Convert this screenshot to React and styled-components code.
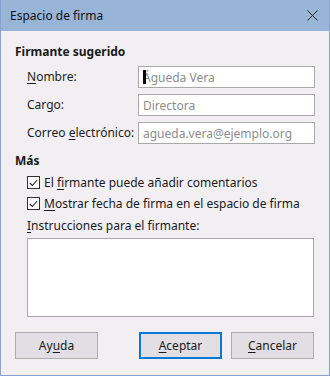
import React from 'react'
import styled, { createGlobalStyle } from 'styled-components'

const Global = createGlobalStyle`
  html, body { margin: 0; padding: 0; background: #f2eff3; }
  body { font-family: "Noto Sans", "Open Sans", sans-serif; font-size: 12px; color: #1a1a1a; }
`

const Window = styled.div`
  width: 330px;
  height: 376px;
  box-sizing: border-box;
  border: 1px solid #86a4cc;
  border-top: none;
  background: #f2eff3;
  display: flex;
  flex-direction: column;
`

const TitleBar = styled.div`
  height: 31px;
  flex: none;
  background: #98b4d7;
  display: flex;
  align-items: center;
  justify-content: space-between;
  padding: 0 11px 0 9px;
  font-size: 12px;
  color: #111;
`

const CloseBtn = styled.svg`
  width: 11px;
  height: 11px;
`

const Body = styled.div`
  flex: 1;
  display: flex;
  flex-direction: column;
  padding: 13px 14px 0 14px;
`

const Heading = styled.div`
  font-weight: bold;
  line-height: 16px;
  height: 16px;
  margin-top: ${p => p.$top || 0}px;
`

const FormGrid = styled.div`
  display: grid;
  grid-template-columns: 111px 1fr;
  row-gap: 6px;
  margin: 6px 0 0 12px;
  align-items: center;
`

const Label = styled.div`
  line-height: 22px;
`

const Field = styled.div`
  position: relative;
  height: 22px;
  box-sizing: border-box;
  border: 1px solid #a9a9a9;
  background: #fff;
  color: #8c8c8c;
  padding: 0 4px;
  display: flex;
  align-items: center;
  white-space: nowrap;
  overflow: hidden;
`

const Caret = styled.span`
  position: absolute;
  left: 4px;
  top: 3px;
  width: 3px;
  height: 14px;
  background: #000;
`

const Options = styled.div`
  display: flex;
  flex-direction: column;
  margin: 3px 0 0 12px;
`

const CheckRow = styled.label`
  display: flex;
  align-items: center;
  gap: 4px;
  height: 21px;
`

const Box = styled.span`
  width: 11px;
  height: 11px;
  border: 1px solid #333;
  background: #fff;
  display: flex;
  align-items: center;
  justify-content: center;
`

const Caption = styled.div`
  line-height: 16px;
  margin-top: 4px;
`

const TextArea = styled.div`
  height: 79px;
  box-sizing: border-box;
  border: 1px solid #a9a9a9;
  background: #fff;
  margin-top: 4px;
  margin-right: 1px;
`

const Buttons = styled.div`
  display: flex;
  margin-top: 15px;
  gap: 9px;
`

const Button = styled.div`
  width: 83px;
  height: 27px;
  box-sizing: border-box;
  border: ${p => (p.$default ? '2px solid #0a78d7' : '1px solid #adadad')};
  background: #e1dfe3;
  display: flex;
  align-items: center;
  justify-content: center;
  margin-left: ${p => p.$push ? 'auto' : '0'};
  margin-right: ${p => p.$last ? '1px' : '0'};
`

const U = styled.span`
  text-decoration: underline;
  text-underline-offset: 2px;
`

const Check = () => (
  <Box>
    <svg width="9" height="8" viewBox="0 0 9 8">
      <path d="M0.8 4 L3.3 6.5 L8.2 1" fill="none" stroke="#222" strokeWidth="1.1" />
    </svg>
  </Box>
)

export default function App() {
  return (
    <>
      <Global />
      <Window>
        <TitleBar>
          <span>Espacio de firma</span>
          <CloseBtn viewBox="0 0 11 11">
            <path d="M0.5 0.5 L10.5 10.5 M10.5 0.5 L0.5 10.5" stroke="#222" strokeWidth="1" />
          </CloseBtn>
        </TitleBar>
        <Body>
          <Heading>Firmante sugerido</Heading>
          <FormGrid>
            <Label><U>N</U>ombre:</Label>
            <Field><Caret />Águeda Vera</Field>
            <Label>Car<U>g</U>o:</Label>
            <Field>Directora</Field>
            <Label>Correo <U>e</U>lectrónico:</Label>
            <Field>agueda.vera@ejemplo.org</Field>
          </FormGrid>
          <Heading $top={9}>Más</Heading>
          <Options>
            <CheckRow><Check /><span>El <U>f</U>irmante puede añadir comentarios</span></CheckRow>
            <CheckRow><Check /><span><U>M</U>ostrar fecha de firma en el espacio de firma</span></CheckRow>
            <Caption><U>I</U>nstrucciones para el firmante:</Caption>
            <TextArea />
          </Options>
          <Buttons>
            <Button>Ay<U>u</U>da</Button>
            <Button $default $push><U>A</U>ceptar</Button>
            <Button $last><U>C</U>ancelar</Button>
          </Buttons>
        </Body>
      </Window>
    </>
  )
}
